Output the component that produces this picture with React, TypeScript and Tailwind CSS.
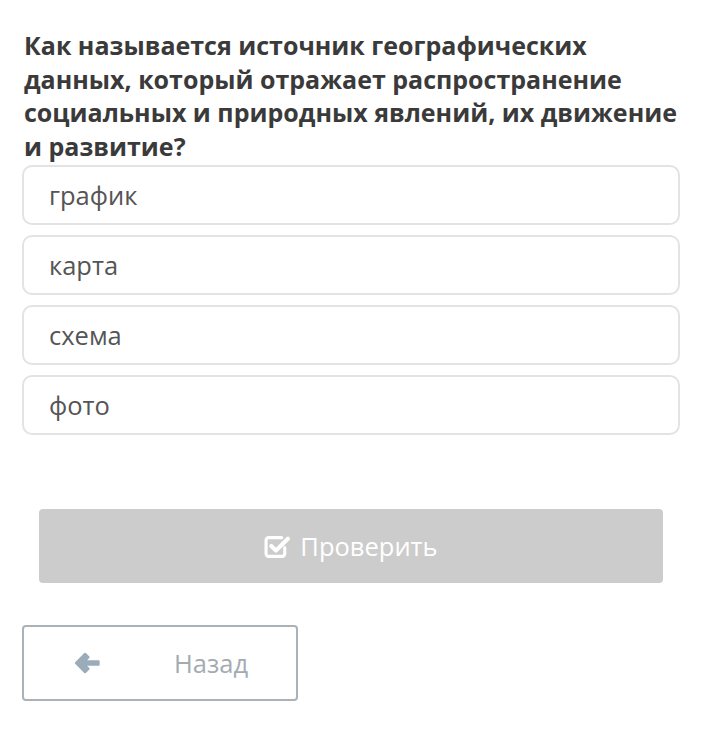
const options = ["график", "карта", "схема", "фото"];

function CheckSquareIcon() {
  return (
    <svg viewBox="0 0 26 24" className="h-[25px] w-[27px]" fill="none">
      <path
        d="M20 13v6a2.5 2.5 0 0 1-2.5 2.5h-13A2.5 2.5 0 0 1 2 19V6a2.5 2.5 0 0 1 2.5-2.5H17"
        stroke="currentColor"
        strokeWidth="3"
        strokeLinecap="round"
      />
      <path
        d="M7 11.5l4.5 4.5L23 4.5"
        stroke="currentColor"
        strokeWidth="4"
        strokeLinecap="round"
        strokeLinejoin="round"
      />
    </svg>
  );
}

function ArrowLeftIcon() {
  return (
    <svg viewBox="0 0 27 23" className="h-[22px] w-[27px]">
      <path
        d="M1.5 11.5L11 2l3.5 3.5L10 10h15v3H10l4.5 4.5L11 21z"
        fill="currentColor"
        stroke="currentColor"
        strokeWidth="2.5"
        strokeLinejoin="round"
      />
    </svg>
  );
}

export default function App() {
  return (
    <div className="min-h-[751px] w-[702px] bg-white font-['Open_Sans',sans-serif]">
      <div className="px-[22px] pt-[29px]">
        <h1 className="pl-[2px] text-[25px] font-bold leading-[33.5px] text-[#3a3a3a]">
          Как называется источник географических данных, который отражает распространение социальных и природных
          явлений, их движение и развитие?
        </h1>

        <div className="mt-[2px] flex flex-col gap-[10px]">
          {options.map((opt) => (
            <div
              key={opt}
              className="flex h-[60px] items-center rounded-[10px] border-2 border-[#e3e3e3] px-[25px] text-[25.5px] text-[#555555]"
            >
              {opt}
            </div>
          ))}
        </div>

        <div className="mt-[74px] px-[17px]">
          <button
            type="button"
            className="flex h-[74px] w-full items-center justify-center gap-[9px] rounded-[4px] bg-[#cccccc] text-[25.5px] text-white"
          >
            <CheckSquareIcon />
            Проверить
          </button>
        </div>

        <div className="mt-[42px]">
          <button
            type="button"
            className="flex h-[76px] w-[276px] items-center rounded-[4px] border-2 border-[#aab2b9] pl-[50px] text-[25.5px] text-[#a3abb2]"
          >
            <span className="text-[#9aacba]">
              <ArrowLeftIcon />
            </span>
            <span className="ml-[73px]">Назад</span>
          </button>
        </div>
      </div>
    </div>
  );
}
